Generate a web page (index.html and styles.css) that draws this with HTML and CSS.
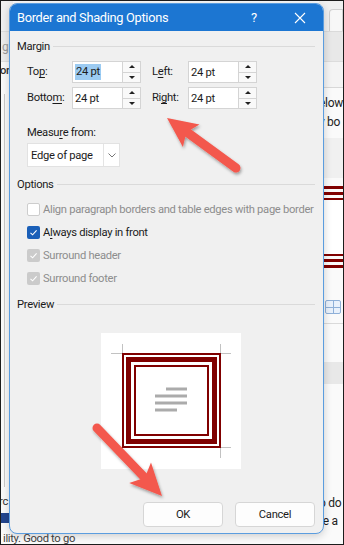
FILE: index.html
```html
<!DOCTYPE html>
<html>
<head>
<meta charset="utf-8">
<link rel="stylesheet" href="styles.css">
</head>
<body>
<div class="screen">
  <div class="app">
    <div class="app-main">
      <div class="strip strip-left">
        <div class="l-ribbon"></div>
        <div class="l-band"><span class="faint">g</span></div>
        <div class="l-text"><span>ord</span></div>
        <div class="l-rule"></div>
        <div class="l-text2"><span>rc</span></div>
        <div class="l-blue"></div>
      </div>
      <div class="strip strip-right">
        <div class="r-top"><div class="r-tab"></div></div>
        <div class="r-band"></div>
        <div class="r-band2"></div>
        <div class="r-text"><span>elow</span><span>y bo</span></div>
        <div class="r-band3"></div>
        <div class="r-border">
          <div class="r-stripe"></div>
          <div class="r-box"></div>
          <div class="r-stripe"></div>
        </div>
        <div class="r-icon-row"><div class="r-icon"></div></div>
        <div class="r-lines"></div>
        <div class="r-text r-text-low"><span>o do</span><span>re a</span></div>
      </div>
    </div>
    <div class="app-status">ility. Good to go</div>
  </div>

  <div class="dialog">
    <div class="titlebar">
      <span class="title">Border and Shading Options</span>
      <span class="help">?</span>
      <svg class="close" width="12" height="12" viewBox="0 0 12 12"><path d="M1 1L11 11M11 1L1 11" stroke="#fff" stroke-width="1.1" fill="none"/></svg>
    </div>
    <div class="body">
      <div class="section-head"><span>Margin</span><i class="rule"></i></div>
      <div class="margins">
        <label class="lbl">To<u>p</u>:</label>
        <div class="spin"><div class="spin-input"><span class="sel">24 pt</span></div><div class="spin-btns"><i class="up"></i><i class="down"></i></div></div>
        <label class="lbl lbl-r">L<u>e</u>ft:</label>
        <div class="spin"><div class="spin-input"><span>24 pt</span></div><div class="spin-btns"><i class="up"></i><i class="down"></i></div></div>
        <label class="lbl">Botto<u>m</u>:</label>
        <div class="spin"><div class="spin-input"><span>24 pt</span></div><div class="spin-btns"><i class="up"></i><i class="down"></i></div></div>
        <label class="lbl lbl-r">Ri<u>g</u>ht:</label>
        <div class="spin"><div class="spin-input"><span>24 pt</span></div><div class="spin-btns"><i class="up"></i><i class="down"></i></div></div>
      </div>
      <div class="measure-label">Measu<u>r</u>e from:</div>
      <div class="dropdown">
        <span class="dd-text">Edge of page</span>
        <span class="dd-btn"><svg width="8" height="5" viewBox="0 0 8 5"><path d="M0.5 0.5L4 4L7.5 0.5" stroke="#777" stroke-width="1" fill="none"/></svg></span>
      </div>
      <div class="section-head sh-options"><span>Options</span><i class="rule"></i></div>
      <div class="checks">
        <div class="check disabled"><i class="box box-empty"></i><span>Align paragraph borders and table edges with page border</span></div>
        <div class="check"><i class="box box-on"><svg width="13" height="13" viewBox="0 0 13 13"><path d="M3.5 6.8L5.6 8.8L9.6 4.4" stroke="#fff" stroke-width="1.1" fill="none"/></svg></i><span>A<u>l</u>ways display in front</span></div>
        <div class="check disabled"><i class="box box-dis"><svg width="13" height="13" viewBox="0 0 13 13"><path d="M3.5 6.8L5.6 8.8L9.6 4.4" stroke="#fff" stroke-width="1.1" fill="none"/></svg></i><span>Surround header</span></div>
        <div class="check disabled"><i class="box box-dis"><svg width="13" height="13" viewBox="0 0 13 13"><path d="M3.5 6.8L5.6 8.8L9.6 4.4" stroke="#fff" stroke-width="1.1" fill="none"/></svg></i><span>Surround footer</span></div>
      </div>
      <div class="section-head sh-preview"><span>Preview</span><i class="rule"></i></div>
      <div class="preview">
        <svg width="140" height="136" viewBox="0 0 140 136">
          <g stroke="#c2c2c2" stroke-width="1" fill="none">
            <path d="M10 20.5H21.5V11"/>
            <path d="M130 20.5H119.5V11"/>
            <path d="M10 114.5H21.5V125"/>
            <path d="M130 114.5H119.5V125"/>
          </g>
          <g fill="none" stroke="#800000">
            <rect x="22" y="21" width="97" height="93" stroke-width="2"/>
            <rect x="27.5" y="26.5" width="86" height="82" stroke-width="5"/>
            <rect x="34" y="33" width="73" height="69" stroke-width="2"/>
          </g>
          <g fill="#ababab">
            <rect x="65" y="54.5" width="21" height="3"/>
            <rect x="54" y="61.5" width="32" height="3"/>
            <rect x="54" y="68.5" width="32" height="3"/>
            <rect x="54" y="75.5" width="22" height="3"/>
          </g>
        </svg>
      </div>
      <div class="buttons">
        <button class="btn">OK</button>
        <button class="btn">Cancel</button>
      </div>
    </div>
  </div>

  <svg class="arrows" width="344" height="545" viewBox="0 0 344 545">
    <defs>
      <filter id="sh" x="-20%" y="-20%" width="140%" height="140%">
        <feDropShadow dx="1" dy="2" stdDeviation="1.4" flood-color="#000" flood-opacity="0.35"/>
      </filter>
    </defs>
    <g fill="#f3594e" stroke="#f3594e" filter="url(#sh)">
      <line x1="184" y1="130" x2="236" y2="168" stroke-width="9" stroke-linecap="round"/>
      <path d="M167 118L199.5 124.4L186.4 132.2L182.9 147Z" stroke="none"/>
      <line x1="146" y1="479" x2="97" y2="428" stroke-width="9" stroke-linecap="round"/>
      <path d="M162 496L129.2 483L144.8 477.8L151 462.4Z" stroke="none"/>
    </g>
  </svg>
</div>
</body>
</html>
```

FILE: styles.css
```css
* { box-sizing: border-box; margin: 0; padding: 0; }
html, body { width: 344px; height: 545px; overflow: hidden; }
body {
  font-family: Roboto, "Liberation Sans", sans-serif;
  font-size: 11.2px;
  letter-spacing: -0.3px;
  color: #1b1b1b;
  background: #1c1c1c;
}
u { text-decoration: underline; text-underline-offset: 2px; }

.screen {
  position: relative;
  width: 344px;
  height: 545px;
  border: 1px solid #1c1c1c;
  background: #fafafa;
  overflow: hidden;
}

/* ---------- background application ---------- */
.app { display: flex; flex-direction: column; height: 100%; }
.app-main { flex: 1; display: flex; justify-content: space-between; }
.strip { display: flex; flex-direction: column; overflow: hidden; white-space: nowrap; }
.strip-left { width: 12px; }
.strip-right { width: 24px; }

.l-ribbon { height: 31px; background: #f0f0f0; border-bottom: 1px solid #dedede; }
.l-band { height: 30px; background: #ececec; color: #9a9a9a; font-size: 12px; line-height: 30px; padding-left: 1px; border-bottom: 1px solid #e0e0e0; }
.l-text { height: 30px; background: #fafafa; line-height: 16px; padding-top: 1px; margin-left: -1px; font-weight: 500; color: #333; }
.l-rule { flex: 1; margin: 2px 0 8px 3px; border-left: 1px solid #c8c8c8; }
.l-text2 { height: 18px; color: #333; margin-left: -2px; }
.l-blue { height: 10px; background: #23468f; margin-bottom: 11px; }
.app-status { height: 10px; line-height: 10px; color: #444; padding-left: 2px; white-space: nowrap; overflow: hidden; background: #fafafa; }

.r-top { height: 31px; background: #f0f0f0; padding-top: 8px; display: flex; justify-content: flex-end; border-bottom: 1px solid #dadada; }
.r-tab { width: 14px; height: 22px; border: 1px solid #d0d0d0; border-bottom: none; border-radius: 4px 0 0 0; background: #f7f7f7; }
.r-band { height: 30px; background: #e8e8e8; border-bottom: 1px solid #dcdcdc; }
.r-band2 { height: 26px; background: #f4f4f4; border-bottom: 1px solid #d8d8d8; }
.r-text { height: 50px; display: flex; flex-direction: column; padding-top: 6px; line-height: 19px; color: #222; font-size: 12px; }
.r-band3 { height: 40px; background: #f0f0f0; }
.r-border { display: flex; flex-direction: column; gap: 3px; padding-top: 8px; height: 110px; }
.r-stripe { height: 9px; border-top: 3px solid #800000; border-bottom: 3px solid #800000; }
.r-box { height: 58px; border: 2px solid #800000; border-right: none; background: #fff; }
.r-icon-row { height: 35px; padding-top: 12px; padding-left: 6px; }
.r-icon { width: 16px; height: 14px; border: 1px solid #8fb0d8; border-radius: 2px; background: linear-gradient(#8fb0d8, #8fb0d8) 50% 0 / 1px 100% no-repeat, linear-gradient(#8fb0d8, #8fb0d8) 0 50% / 100% 1px no-repeat, #e9f1fb; }
.r-lines { flex: 1; border-top: 1px solid #dadada; background: linear-gradient(#e8e8e8, #e8e8e8) 0 38px / 100% 22px no-repeat; }
.r-text-low { height: 44px; padding-top: 4px; line-height: 18px; }

/* ---------- dialog ---------- */
.dialog {
  position: absolute;
  left: 8px;
  top: 2px;
  width: 315px;
  height: 531px;
  border: 1px solid #5b9ddf;
  border-radius: 8px;
  background: #f0f0f0;
  display: flex;
  flex-direction: column;
  overflow: hidden;
  box-shadow: 0 2px 8px rgba(0,0,0,0.18);
}
.titlebar {
  height: 27px;
  background: #1c76d2;
  display: flex;
  align-items: center;
  padding-left: 7px;
  color: #fff;
}
.title { font-size: 12.8px; flex: 1; }
.help { font-size: 13px; width: 12px; margin-right: 31px; }
.close { margin-right: 17px; }

.body {
  flex: 1;
  display: flex;
  flex-direction: column;
  padding: 8px 8px 6px 7px;
}
.section-head { display: flex; align-items: center; height: 16px; line-height: 16px; gap: 3px; }
.section-head .rule { flex: 1; height: 1px; background: #dadada; margin-top: -1px; }
.sh-options { margin-top: 10px; }
.sh-preview { margin-top: 7px; }

.margins {
  margin: 6px 0 0 10px;
  display: grid;
  grid-template-columns: 45px 69px 47px 69px;
  grid-auto-rows: 22px;
  row-gap: 4px;
  align-items: center;
}
.lbl { line-height: 16px; }
.lbl-r { padding-left: 11px; }
.spin { display: flex; height: 22px; }
.spin-input { width: 51px; background: #fff; border: 1px solid #d4d4d4; padding-left: 2px; display: flex; align-items: center; }
.sel { background: #9ccbf2; padding: 0 1px; line-height: 16px; }
.spin-btns { width: 18px; border: 1px solid #d4d4d4; border-left: none; display: flex; flex-direction: column; background: #f9f9f9; }
.spin-btns i { flex: 1; display: flex; align-items: center; justify-content: center; }
.spin-btns .up { border-bottom: 1px solid #d4d4d4; }
.spin-btns .up::after { content: ""; border-left: 3px solid transparent; border-right: 3px solid transparent; border-bottom: 3px solid #222; }
.spin-btns .down::after { content: ""; border-left: 3px solid transparent; border-right: 3px solid transparent; border-top: 3px solid #222; }

.measure-label { margin: 16px 0 0 10px; line-height: 16px; }
.dropdown {
  margin: 2px 0 0 10px;
  width: 93px;
  height: 24px;
  background: #fff;
  border: 1px solid #e2e2e2;
  display: flex;
  align-items: center;
  white-space: nowrap;
}
.dd-text { flex: 1; padding-left: 3px; }
.dd-btn { width: 16px; height: 100%; border-left: 1px solid #e4e4e4; display: flex; align-items: center; justify-content: center; }

.checks { margin: 5px 0 0 10px; display: flex; flex-direction: column; }
.check { height: 23px; display: flex; align-items: center; gap: 3px; white-space: nowrap; }
.check.disabled { color: #8d8d8d; }
.box { width: 13px; height: 13px; border-radius: 2px; display: block; flex: none; }
.box svg { display: block; }
.box-empty { background: #fff; border: 1px solid #cdcdcd; }
.box-on { background: #1a5fb8; }
.box-dis { background: #cbcbcb; }

.preview { margin: 20px 0 0 84px; width: 140px; height: 136px; background: #fff; }
.preview svg { display: block; }

.buttons { margin-top: auto; display: flex; justify-content: flex-end; gap: 12px; }
.btn {
  width: 80px;
  height: 25px;
  font: inherit;
  letter-spacing: inherit;
  color: #1b1b1b;
  background: #fdfdfd;
  border: 1px solid #d6d6d6;
  border-radius: 4px;
}

.arrows { position: absolute; left: -1px; top: -1px; pointer-events: none; }
```
